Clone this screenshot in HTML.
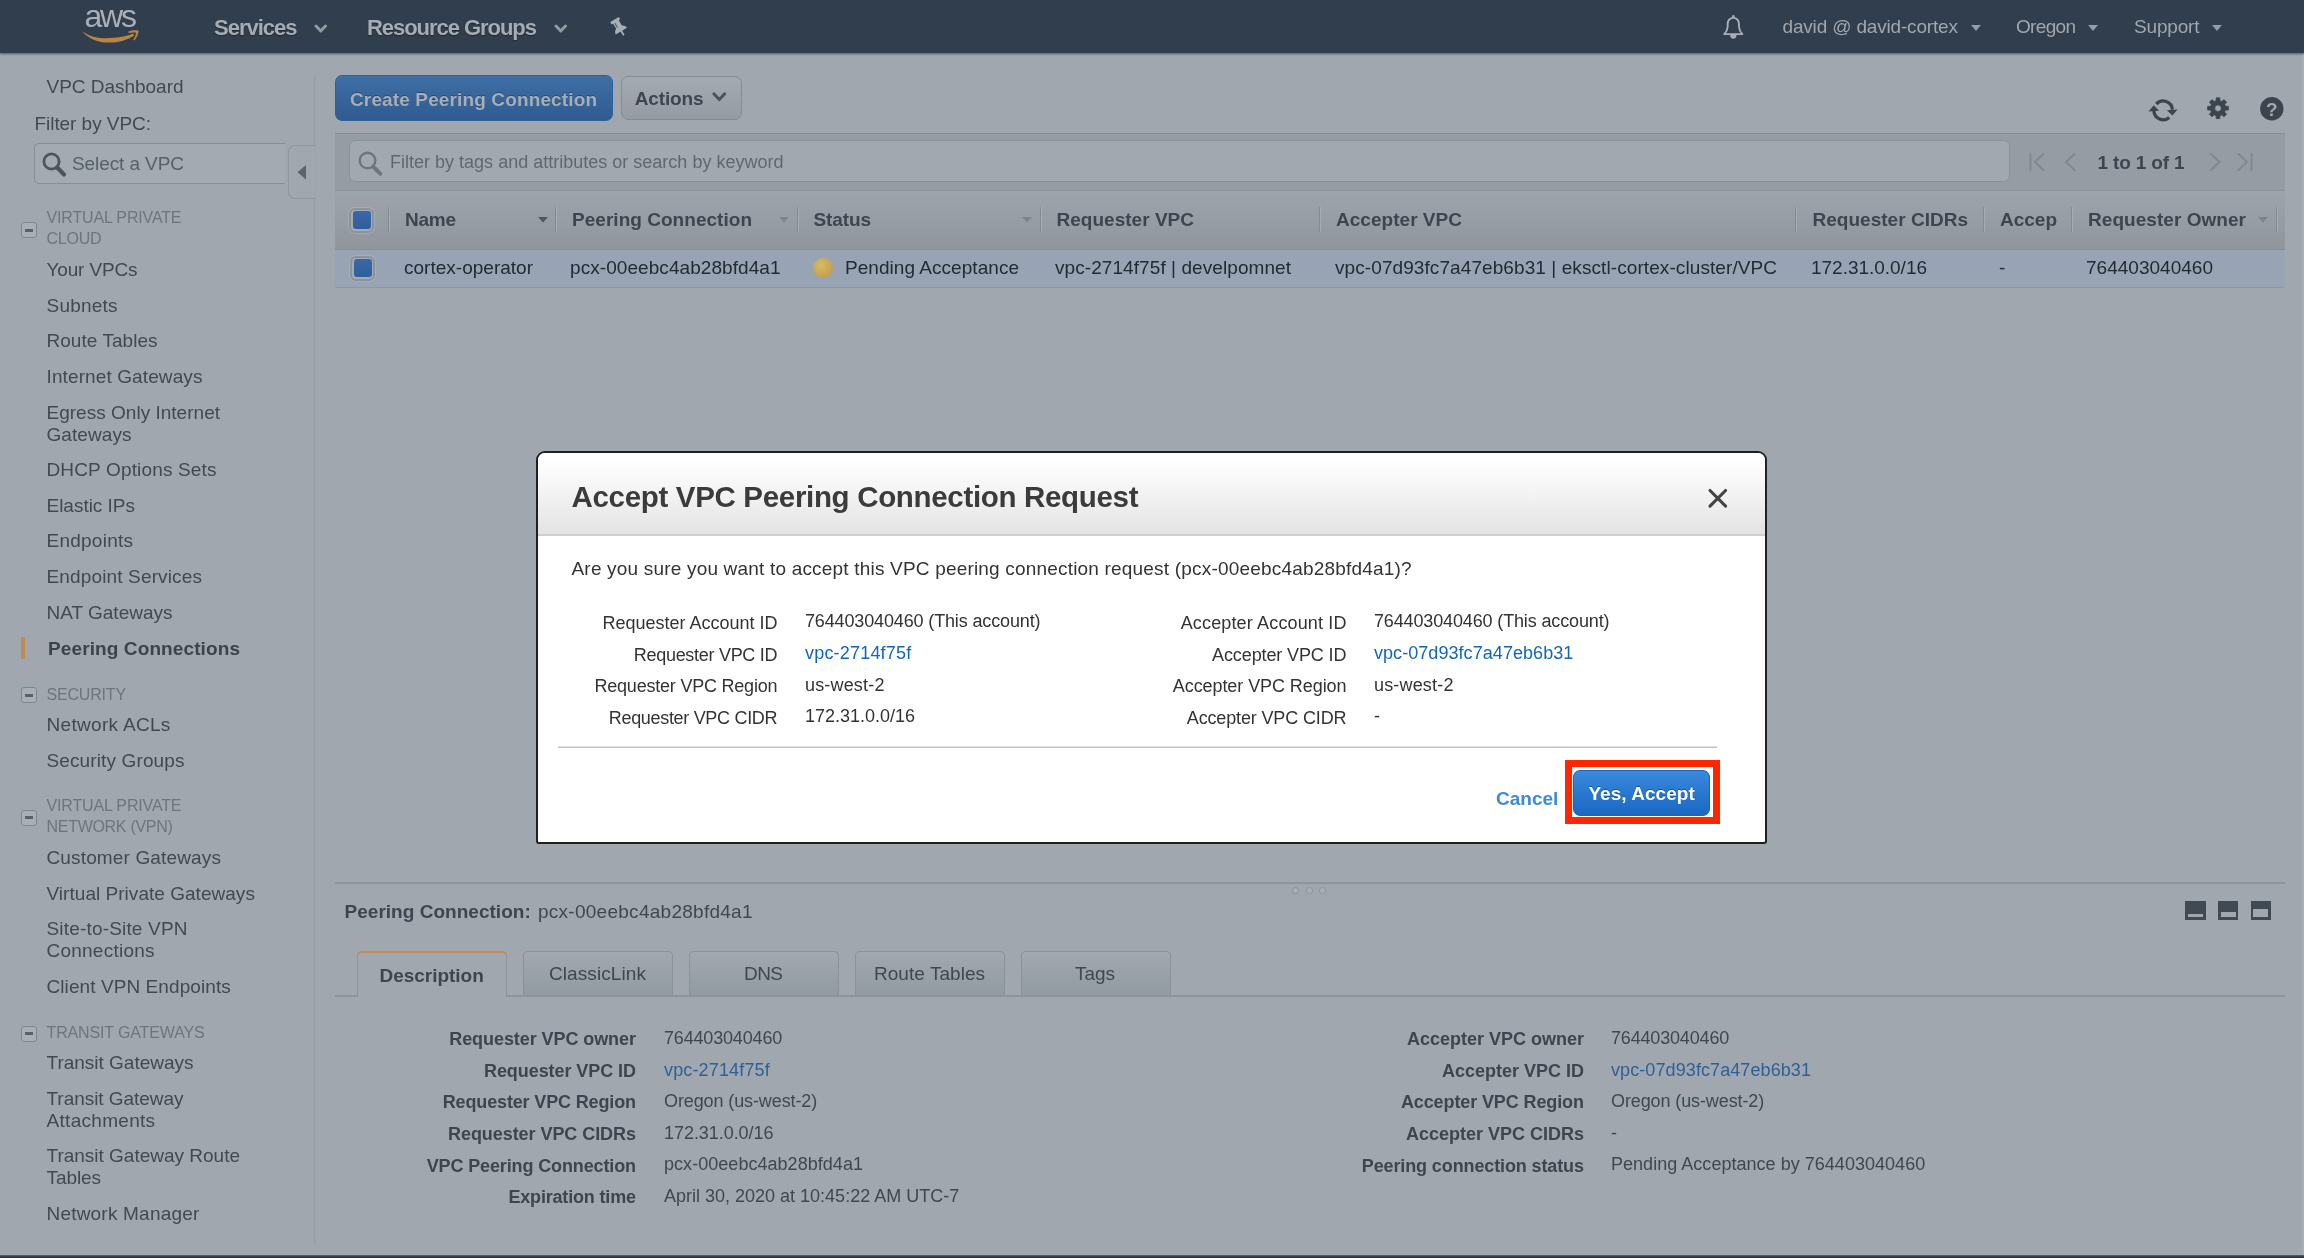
<!DOCTYPE html>
<html lang="en"><head><meta charset="utf-8"><title>VPC Management Console</title>
<style>
html,body{margin:0;padding:0;}
body{width:2304px;height:1258px;overflow:hidden;position:relative;background:#a0a7af;font-family:'Liberation Sans', sans-serif;}
div,span,svg{position:absolute;box-sizing:border-box;}
span{white-space:pre;}
</style></head><body>
<div id="app" style="left:0;top:0;width:2304px;height:1258px;will-change:transform;">
<div style="left:0px;top:0px;width:2304px;height:53px;background:#303e4d;box-shadow:0 1px 2px rgba(20,28,38,.55);"></div>
<svg style="left:78px;top:27px" width="64" height="18" viewBox="78 27 64 18"><path d="M81.9 30.9 C90 37,100 38.6,110 38.1 C120 37.6,128 36,133.2 33.6 L134.1 35.4 C128 39.6,119 42.6,109 42.6 C98 42.6,88 38.6,81.9 30.9 Z" fill="#ba8444"/><path d="M128.3 31.6 C131.5 30.4,135.5 29.9,138.7 30.6 C138.5 33.5,137 37.5,134.4 40.5 L133.2 39.8 C134.9 37.2,136 34.6,136 32.7 C133.8 32.3,131 32.5,128.6 33.1 Z" fill="#ba8444"/></svg>
<svg style="left:313.5px;top:23.5px" width="13.5" height="10" viewBox="0 0 13.5 10"><path d="M2 2 L6.75 7 L11.5 2" fill="none" stroke="#9299a1" stroke-width="3" stroke-linecap="round" stroke-linejoin="round"/></svg>
<svg style="left:553.5px;top:23.5px" width="13.5" height="10" viewBox="0 0 13.5 10"><path d="M2 2 L6.75 7 L11.5 2" fill="none" stroke="#9299a1" stroke-width="3" stroke-linecap="round" stroke-linejoin="round"/></svg>
<svg style="left:605.5px;top:13.6px" width="26" height="26" viewBox="0 0 26 26"><g transform="translate(13.1 13.3) rotate(-30.6)" fill="#a7aeb6"><rect x="-5.2" y="-9" width="10.4" height="2.7" rx="1.2"/><rect x="-3.3" y="-7" width="6.6" height="8"/><path d="M-6.6 4.4 C-6.2 0.6,-3 -0.8,0 -0.8 C3 -0.8,6.2 0.6,6.6 4.4 Z"/><rect x="-0.85" y="4" width="1.7" height="5.2"/><rect x="-2.1" y="-5.6" width="1" height="5" fill="#4a5866"/></g></svg>
<svg style="left:1720px;top:13px" width="28" height="28" viewBox="0 0 28 28"><path d="M4.2 21.1 C6.2 19.2,7.3 17.5,7.6 14 L7.7 10.5 A5.6 5.6 0 0 1 18.9 10.5 L19 14 C19.3 17.5,20.4 19.2,22.4 21.1 Z" fill="none" stroke="#a7aeb6" stroke-width="1.9" stroke-linejoin="round"/><circle cx="13.3" cy="3.2" r="1.25" fill="#a7aeb6"/><path d="M13.3 3 L13.3 5" stroke="#a7aeb6" stroke-width="2"/><path d="M10.1 22 A3.2 3.7 0 0 0 16.5 22 Z" fill="#a7aeb6"/></svg>
<svg style="left:1971px;top:24.5px" width="10" height="6" viewBox="0 0 10 6"><path d="M0 0 L10 0 L5.0 6 Z" fill="#969da5"/></svg>
<svg style="left:2088px;top:24.5px" width="10" height="6" viewBox="0 0 10 6"><path d="M0 0 L10 0 L5.0 6 Z" fill="#969da5"/></svg>
<svg style="left:2212px;top:24.5px" width="10" height="6" viewBox="0 0 10 6"><path d="M0 0 L10 0 L5.0 6 Z" fill="#969da5"/></svg>
<div style="left:314px;top:75px;width:1px;height:1169px;background:#969da5;"></div>
<div style="left:315px;top:75px;width:1px;height:1169px;background:#9ca3ab;"></div>
<div style="left:34px;top:143px;width:251px;height:40.5px;border:1.5px solid #878e96;border-right:none;border-radius:5px 0 0 5px;background:#a3aab2;"></div>
<div style="left:287.5px;top:144.5px;width:27.5px;height:54px;border:1.5px solid #8f969e;border-right:none;border-radius:7px 0 0 7px;background:#a0a7af;"></div>
<svg style="left:296px;top:164px" width="12" height="17" viewBox="0 0 12 17"><path d="M1.5 8.2 L10 1 L10 15.5 Z" fill="#5b636c"/></svg>
<svg style="left:40px;top:150px" width="28" height="28" viewBox="0 0 28 28"><circle cx="11.5" cy="11.5" r="7.6" fill="none" stroke="#4c545d" stroke-width="2.8"/><path d="M17.2 17.6 L24 24.4" stroke="#4c545d" stroke-width="4.2" stroke-linecap="round"/></svg>
<div style="left:21px;top:222px;width:16px;height:16px;border:1.5px solid #7f868e;border-radius:3px;background:#a8afb6;"></div>
<div style="left:25px;top:228.5px;width:8px;height:3px;background:#59616a;"></div>
<div style="left:21px;top:687px;width:16px;height:16px;border:1.5px solid #7f868e;border-radius:3px;background:#a8afb6;"></div>
<div style="left:25px;top:693.5px;width:8px;height:3px;background:#59616a;"></div>
<div style="left:21px;top:809.5px;width:16px;height:16px;border:1.5px solid #7f868e;border-radius:3px;background:#a8afb6;"></div>
<div style="left:25px;top:816.0px;width:8px;height:3px;background:#59616a;"></div>
<div style="left:21px;top:1025.5px;width:16px;height:16px;border:1.5px solid #7f868e;border-radius:3px;background:#a8afb6;"></div>
<div style="left:25px;top:1032.0px;width:8px;height:3px;background:#59616a;"></div>
<div style="left:21px;top:636.5px;width:4px;height:22px;background:#c08a52;border-radius:1px;"></div>
<div style="left:335px;top:75px;width:278px;height:45.5px;border:1.5px solid #30609a;border-radius:7px;background:linear-gradient(#3e6fa4,#305b91);"></div>
<div style="left:620.5px;top:75.5px;width:121px;height:44.5px;border:1.5px solid #858c95;border-radius:7px;background:linear-gradient(#a3aab2,#949ba3);"></div>
<svg style="left:712px;top:92px" width="14.5" height="10.5" viewBox="0 0 14.5 10.5"><path d="M2 2 L7.25 7.5 L12.5 2" fill="none" stroke="#4c545d" stroke-width="3.2" stroke-linecap="round" stroke-linejoin="round"/></svg>
<svg style="left:2145px;top:95px" width="36" height="30" viewBox="0 0 36 30"><g fill="none" stroke="#3c444e" stroke-width="3.3"><path d="M11.2 9 A9.4 9.4 0 0 1 27.4 14.6"/><path d="M8.9 16 A9.4 9.4 0 0 0 24.3 22.6"/></g><path d="M21.8 15.2 L32.6 14.4 L27.4 20.6 Z" fill="#3c444e"/><path d="M3.5 16.6 L8.8 10.2 L14 15.8 Z" fill="#3c444e"/></svg>
<svg style="left:2205px;top:95px" width="26" height="26" viewBox="0 0 26 26"><path d="M23.34 11.39 L23.34 15.01 L20.46 15.11 L19.63 17.12 L21.59 19.24 L19.04 21.79 L16.92 19.83 L14.91 20.66 L14.81 23.54 L11.19 23.54 L11.09 20.66 L9.08 19.83 L6.96 21.79 L4.41 19.24 L6.37 17.12 L5.54 15.11 L2.66 15.01 L2.66 11.39 L5.54 11.29 L6.37 9.28 L4.41 7.16 L6.96 4.61 L9.08 6.57 L11.09 5.74 L11.19 2.86 L14.81 2.86 L14.91 5.74 L16.92 6.57 L19.04 4.61 L21.59 7.16 L19.63 9.28 L20.46 11.29 Z M16.3 13.2 A3.3 3.3 0 1 0 9.7 13.2 A3.3 3.3 0 1 0 16.3 13.2 Z" fill="#3c444e" fill-rule="evenodd" stroke="#3c444e" stroke-width="0.8" stroke-linejoin="round"/></svg>
<svg style="left:2259px;top:97px" width="26" height="26" viewBox="0 0 26 26"><circle cx="12.8" cy="11.8" r="11.7" fill="#3c444e"/><text x="12.8" y="18.5" text-anchor="middle" font-family="Liberation Sans" font-weight="700" font-size="19" fill="#a0a7af">?</text></svg>
<div style="left:335px;top:133px;width:1950px;height:57.5px;background:#959ca4;border-top:1.5px solid #858c94;"></div>
<div style="left:349px;top:140px;width:1660.5px;height:41.5px;border:1.5px solid #8a9199;border-radius:6px;background:#a1a8b0;"></div>
<svg style="left:356px;top:149px" width="28" height="28" viewBox="0 0 28 28"><circle cx="11.5" cy="11.5" r="7.8" fill="none" stroke="#6d757d" stroke-width="2.4"/><path d="M17.4 17.8 L24.4 24.8" stroke="#6d757d" stroke-width="3.8" stroke-linecap="round"/></svg>
<svg style="left:2029px;top:152.5px" width="16" height="18" viewBox="0 0 16 18"><path d="M1.5 1 L1.5 17 M14.5 1 L6 9 L14.5 17" fill="none" stroke="#818890" stroke-width="2" stroke-linecap="round" stroke-linejoin="round"/></svg>
<svg style="left:2064px;top:152.5px" width="13" height="18" viewBox="0 0 13 18"><path d="M10.5 1 L2 9 L10.5 17" fill="none" stroke="#818890" stroke-width="2" stroke-linecap="round" stroke-linejoin="round"/></svg>
<svg style="left:2208.5px;top:152.5px" width="13" height="18" viewBox="0 0 13 18"><path d="M2 1 L10.5 9 L2 17" fill="none" stroke="#818890" stroke-width="2" stroke-linecap="round" stroke-linejoin="round"/></svg>
<svg style="left:2237px;top:152.5px" width="16" height="18" viewBox="0 0 16 18"><path d="M14.5 1 L14.5 17 M1.5 1 L10 9 L1.5 17" fill="none" stroke="#818890" stroke-width="2" stroke-linecap="round" stroke-linejoin="round"/></svg>
<div style="left:335px;top:190px;width:1950px;height:59.5px;background:linear-gradient(#9da4ac,#8f969e);border-top:1px solid #8b929a;border-bottom:1.5px solid #868d95;"></div>
<div style="left:335px;top:249.5px;width:1950px;height:38px;background:#98a4b3;border-bottom:1.5px solid #8d98a6;"></div>
<div style="left:349px;top:207.5px;width:25px;height:25px;border:2px solid #8b929b;border-radius:6px;background:#a4abb3;box-shadow:0 0 0 1px rgba(176,183,190,.55);"></div>
<div style="left:352.5px;top:211.0px;width:18px;height:18px;border-radius:3px;background:linear-gradient(#3767a6,#30609c);"></div>
<div style="left:350px;top:255.5px;width:25px;height:25px;border:2px solid #8b929b;border-radius:6px;background:#a4abb3;box-shadow:0 0 0 1px rgba(176,183,190,.55);"></div>
<div style="left:353.5px;top:259.0px;width:18px;height:18px;border-radius:3px;background:linear-gradient(#3767a6,#30609c);"></div>
<div style="left:388px;top:207px;width:1px;height:24.5px;background:#838a92;"></div>
<div style="left:389px;top:207px;width:1px;height:24.5px;background:#a6adb5;"></div>
<div style="left:555px;top:207px;width:1px;height:24.5px;background:#838a92;"></div>
<div style="left:556px;top:207px;width:1px;height:24.5px;background:#a6adb5;"></div>
<div style="left:797px;top:207px;width:1px;height:24.5px;background:#838a92;"></div>
<div style="left:798px;top:207px;width:1px;height:24.5px;background:#a6adb5;"></div>
<div style="left:1040px;top:207px;width:1px;height:24.5px;background:#838a92;"></div>
<div style="left:1041px;top:207px;width:1px;height:24.5px;background:#a6adb5;"></div>
<div style="left:1319px;top:207px;width:1px;height:24.5px;background:#838a92;"></div>
<div style="left:1320px;top:207px;width:1px;height:24.5px;background:#a6adb5;"></div>
<div style="left:1795px;top:207px;width:1px;height:24.5px;background:#838a92;"></div>
<div style="left:1796px;top:207px;width:1px;height:24.5px;background:#a6adb5;"></div>
<div style="left:1983px;top:207px;width:1px;height:24.5px;background:#838a92;"></div>
<div style="left:1984px;top:207px;width:1px;height:24.5px;background:#a6adb5;"></div>
<div style="left:2071px;top:207px;width:1px;height:24.5px;background:#838a92;"></div>
<div style="left:2072px;top:207px;width:1px;height:24.5px;background:#a6adb5;"></div>
<div style="left:2276px;top:207px;width:1px;height:24.5px;background:#838a92;"></div>
<div style="left:2277px;top:207px;width:1px;height:24.5px;background:#a6adb5;"></div>
<svg style="left:537.5px;top:217px" width="10" height="5.5" viewBox="0 0 10 5.5"><path d="M0 0 L10 0 L5.0 5.5 Z" fill="#4d555e"/></svg>
<svg style="left:779px;top:217px" width="10" height="5.5" viewBox="0 0 10 5.5"><path d="M0 0 L10 0 L5.0 5.5 Z" fill="#7d848c"/></svg>
<svg style="left:1022px;top:217px" width="10" height="5.5" viewBox="0 0 10 5.5"><path d="M0 0 L10 0 L5.0 5.5 Z" fill="#7d848c"/></svg>
<svg style="left:2258px;top:217px" width="10" height="5.5" viewBox="0 0 10 5.5"><path d="M0 0 L10 0 L5.0 5.5 Z" fill="#7d848c"/></svg>
<div style="left:813px;top:257.5px;width:20px;height:20px;border-radius:50%;background:radial-gradient(circle at 40% 35%,#d6bb68,#c5a44f 62%,#b59445);"></div>
<div style="left:334.5px;top:882px;width:1950.5px;height:2px;background:#8d949c;"></div>
<div style="left:1292px;top:887px;width:6.5px;height:6.5px;border:1.5px solid #8a9199;border-radius:50%;background:#a9b0b7;"></div>
<div style="left:1306px;top:887px;width:6.5px;height:6.5px;border:1.5px solid #8a9199;border-radius:50%;background:#a9b0b7;"></div>
<div style="left:1319px;top:887px;width:6.5px;height:6.5px;border:1.5px solid #8a9199;border-radius:50%;background:#a9b0b7;"></div>
<div style="left:2185px;top:900.5px;width:20.5px;height:19px;background:#414953;"></div>
<div style="left:2187.8px;top:914.3px;width:15px;height:2.8px;background:#a0a7af;"></div>
<div style="left:2217.8px;top:900.5px;width:20.5px;height:19px;background:#414953;"></div>
<div style="left:2220.5px;top:911.5px;width:15.2px;height:5.2px;background:#a0a7af;"></div>
<div style="left:2250.6px;top:900.5px;width:20.5px;height:19px;background:#414953;"></div>
<div style="left:2253.3px;top:908.6px;width:15.2px;height:8px;background:#a0a7af;"></div>
<div style="left:334.5px;top:994.5px;width:1950.5px;height:2px;background:#8d949c;"></div>
<div style="left:357px;top:951px;width:150px;height:45.5px;background:#a0a7af;border:1.5px solid #8d949c;border-bottom:none;border-top:2.5px solid #bf8a55;border-radius:5px 5px 0 0;"></div>
<div style="left:522.5px;top:951px;width:150.5px;height:44px;background:linear-gradient(#a1a8b0,#929aa2);border:1.5px solid #8a9199;border-bottom:none;border-radius:5px 5px 0 0;"></div>
<div style="left:688.75px;top:951px;width:150.5px;height:44px;background:linear-gradient(#a1a8b0,#929aa2);border:1.5px solid #8a9199;border-bottom:none;border-radius:5px 5px 0 0;"></div>
<div style="left:854.5px;top:951px;width:150.5px;height:44px;background:linear-gradient(#a1a8b0,#929aa2);border:1.5px solid #8a9199;border-bottom:none;border-radius:5px 5px 0 0;"></div>
<div style="left:1020.5px;top:951px;width:150.5px;height:44px;background:linear-gradient(#a1a8b0,#929aa2);border:1.5px solid #8a9199;border-bottom:none;border-radius:5px 5px 0 0;"></div>
<div style="left:2302px;top:55px;width:2px;height:1200px;background:#a7aeb6;"></div>
<div style="left:0px;top:1254.5px;width:2304px;height:4px;background:linear-gradient(#56626f,#1f2b38 70%);"></div>
<span style="left:84.50px;top:-5.00px;font-size:32px;line-height:42px;color:#a9b0b9;letter-spacing:-2.203px;">aws</span>
<span style="left:214.00px;top:12.50px;font-size:22px;line-height:29px;color:#a5acb4;font-weight:700;letter-spacing:-1.004px;text-shadow:0 1px 1px rgba(20,28,38,.6);">Services</span>
<span style="left:367.00px;top:12.50px;font-size:22px;line-height:29px;color:#a5acb4;font-weight:700;letter-spacing:-1.044px;text-shadow:0 1px 1px rgba(20,28,38,.6);">Resource Groups</span>
<span style="left:1782.50px;top:14.00px;font-size:19px;line-height:25px;color:#a0a7af;letter-spacing:-0.172px;">david @ david-cortex</span>
<span style="left:2016.00px;top:14.00px;font-size:19px;line-height:25px;color:#a0a7af;letter-spacing:-0.675px;">Oregon</span>
<span style="left:2134.00px;top:14.00px;font-size:19px;line-height:25px;color:#a0a7af;letter-spacing:-0.174px;">Support</span>
<span style="left:46.50px;top:74.00px;font-size:19px;line-height:25px;color:#414953;letter-spacing:-0.025px;">VPC Dashboard</span>
<span style="left:34.50px;top:111.00px;font-size:19px;line-height:25px;color:#414953;letter-spacing:-0.054px;">Filter by VPC:</span>
<span style="left:72.00px;top:151.00px;font-size:19px;line-height:25px;color:#566069;letter-spacing:-0.091px;">Select a VPC</span>
<span style="left:46.50px;top:207.00px;font-size:16px;line-height:21px;color:#6d757d;letter-spacing:-0.158px;">VIRTUAL PRIVATE</span>
<span style="left:46.50px;top:228.00px;font-size:16px;line-height:21px;color:#6d757d;letter-spacing:-0.254px;">CLOUD</span>
<span style="left:46.50px;top:257.30px;font-size:19px;line-height:25px;color:#414953;letter-spacing:-0.156px;">Your VPCs</span>
<span style="left:46.50px;top:292.80px;font-size:19px;line-height:25px;color:#414953;letter-spacing:0.211px;">Subnets</span>
<span style="left:46.50px;top:328.30px;font-size:19px;line-height:25px;color:#414953;letter-spacing:0.040px;">Route Tables</span>
<span style="left:46.50px;top:364.30px;font-size:19px;line-height:25px;color:#414953;letter-spacing:0.112px;">Internet Gateways</span>
<span style="left:46.50px;top:399.80px;font-size:19px;line-height:25px;color:#414953;letter-spacing:0.016px;">Egress Only Internet</span>
<span style="left:46.50px;top:421.80px;font-size:19px;line-height:25px;color:#414953;letter-spacing:0.074px;">Gateways</span>
<span style="left:46.50px;top:457.30px;font-size:19px;line-height:25px;color:#414953;letter-spacing:0.152px;">DHCP Options Sets</span>
<span style="left:46.50px;top:492.80px;font-size:19px;line-height:25px;color:#414953;letter-spacing:-0.020px;">Elastic IPs</span>
<span style="left:46.50px;top:528.30px;font-size:19px;line-height:25px;color:#414953;letter-spacing:0.248px;">Endpoints</span>
<span style="left:46.50px;top:564.30px;font-size:19px;line-height:25px;color:#414953;letter-spacing:0.146px;">Endpoint Services</span>
<span style="left:46.50px;top:599.80px;font-size:19px;line-height:25px;color:#414953;">NAT Gateways</span>
<span style="left:48.00px;top:635.50px;font-size:19px;line-height:25px;color:#3b434d;font-weight:700;letter-spacing:0.109px;">Peering Connections</span>
<span style="left:46.50px;top:683.50px;font-size:16px;line-height:21px;color:#6d757d;letter-spacing:-0.187px;">SECURITY</span>
<span style="left:46.50px;top:712.30px;font-size:19px;line-height:25px;color:#414953;letter-spacing:0.311px;">Network ACLs</span>
<span style="left:46.50px;top:747.80px;font-size:19px;line-height:25px;color:#414953;letter-spacing:0.126px;">Security Groups</span>
<span style="left:46.50px;top:795.00px;font-size:16px;line-height:21px;color:#6d757d;letter-spacing:-0.158px;">VIRTUAL PRIVATE</span>
<span style="left:46.50px;top:816.00px;font-size:16px;line-height:21px;color:#6d757d;letter-spacing:-0.290px;">NETWORK (VPN)</span>
<span style="left:46.50px;top:845.30px;font-size:19px;line-height:25px;color:#414953;letter-spacing:0.142px;">Customer Gateways</span>
<span style="left:46.50px;top:880.80px;font-size:19px;line-height:25px;color:#414953;letter-spacing:0.031px;">Virtual Private Gateways</span>
<span style="left:46.50px;top:916.30px;font-size:19px;line-height:25px;color:#414953;letter-spacing:0.178px;">Site-to-Site VPN</span>
<span style="left:46.50px;top:938.30px;font-size:19px;line-height:25px;color:#414953;letter-spacing:0.237px;">Connections</span>
<span style="left:46.50px;top:973.80px;font-size:19px;line-height:25px;color:#414953;letter-spacing:0.083px;">Client VPN Endpoints</span>
<span style="left:46.50px;top:1021.50px;font-size:16px;line-height:21px;color:#6d757d;letter-spacing:-0.141px;">TRANSIT GATEWAYS</span>
<span style="left:46.50px;top:1050.30px;font-size:19px;line-height:25px;color:#414953;letter-spacing:-0.008px;">Transit Gateways</span>
<span style="left:46.50px;top:1086.30px;font-size:19px;line-height:25px;color:#414953;letter-spacing:-0.045px;">Transit Gateway</span>
<span style="left:46.50px;top:1108.30px;font-size:19px;line-height:25px;color:#414953;letter-spacing:0.299px;">Attachments</span>
<span style="left:46.50px;top:1143.30px;font-size:19px;line-height:25px;color:#414953;letter-spacing:-0.005px;">Transit Gateway Route</span>
<span style="left:46.50px;top:1165.30px;font-size:19px;line-height:25px;color:#414953;letter-spacing:-0.084px;">Tables</span>
<span style="left:46.50px;top:1201.30px;font-size:19px;line-height:25px;color:#414953;letter-spacing:0.203px;">Network Manager</span>
<span style="left:350.00px;top:86.50px;font-size:19px;line-height:25px;color:#a7aeb6;font-weight:700;letter-spacing:0.130px;text-shadow:0 -1px 0 rgba(20,40,80,.45);">Create Peering Connection</span>
<span style="left:634.75px;top:86.00px;font-size:19px;line-height:25px;color:#3d4650;font-weight:700;letter-spacing:-0.156px;">Actions</span>
<span style="left:390.00px;top:151.00px;font-size:18px;line-height:23px;color:#5f6871;letter-spacing:0.006px;">Filter by tags and attributes or search by keyword</span>
<span style="left:2097.50px;top:149.50px;font-size:19px;line-height:25px;color:#3d4650;font-weight:700;letter-spacing:-0.169px;">1 to 1 of 1</span>
<span style="left:405.00px;top:207.00px;font-size:19px;line-height:25px;color:#3d4650;font-weight:700;letter-spacing:-0.250px;">Name</span>
<span style="left:572.00px;top:207.00px;font-size:19px;line-height:25px;color:#3d4650;font-weight:700;letter-spacing:0.031px;">Peering Connection</span>
<span style="left:813.50px;top:207.00px;font-size:19px;line-height:25px;color:#3d4650;font-weight:700;letter-spacing:-0.116px;">Status</span>
<span style="left:1056.50px;top:207.00px;font-size:19px;line-height:25px;color:#3d4650;font-weight:700;letter-spacing:0.018px;">Requester VPC</span>
<span style="left:1336.00px;top:207.00px;font-size:19px;line-height:25px;color:#3d4650;font-weight:700;letter-spacing:0.030px;">Accepter VPC</span>
<span style="left:1812.50px;top:207.00px;font-size:19px;line-height:25px;color:#3d4650;font-weight:700;letter-spacing:0.020px;">Requester CIDRs</span>
<span style="left:2000.00px;top:207.00px;font-size:19px;line-height:25px;color:#3d4650;font-weight:700;letter-spacing:-0.008px;">Accep</span>
<span style="left:2088.00px;top:207.00px;font-size:19px;line-height:25px;color:#3d4650;font-weight:700;letter-spacing:0.048px;">Requester Owner</span>
<span style="left:404.00px;top:255.00px;font-size:19px;line-height:25px;color:#222a33;letter-spacing:0.011px;">cortex-operator</span>
<span style="left:570.00px;top:255.00px;font-size:19px;line-height:25px;color:#222a33;letter-spacing:0.066px;">pcx-00eebc4ab28bfd4a1</span>
<span style="left:845.00px;top:255.00px;font-size:19px;line-height:25px;color:#222a33;letter-spacing:0.044px;">Pending Acceptance</span>
<span style="left:1055.00px;top:255.00px;font-size:19px;line-height:25px;color:#222a33;letter-spacing:0.074px;">vpc-2714f75f | develpomnet</span>
<span style="left:1335.00px;top:255.00px;font-size:19px;line-height:25px;color:#222a33;letter-spacing:0.085px;">vpc-07d93fc7a47eb6b31 | eksctl-cortex-cluster/VPC</span>
<span style="left:1811.00px;top:255.00px;font-size:19px;line-height:25px;color:#222a33;letter-spacing:-0.018px;">172.31.0.0/16</span>
<span style="left:1999.00px;top:255.00px;font-size:19px;line-height:25px;color:#222a33;">-</span>
<span style="left:2086.00px;top:255.00px;font-size:19px;line-height:25px;color:#222a33;letter-spacing:0.017px;">764403040460</span>
<span style="left:344.50px;top:898.50px;font-size:19px;line-height:25px;color:#3d4650;font-weight:700;letter-spacing:0.025px;">Peering Connection:</span>
<span style="left:538.00px;top:898.50px;font-size:19px;line-height:25px;color:#3f4751;letter-spacing:0.266px;">pcx-00eebc4ab28bfd4a1</span>
<span style="left:379.50px;top:963.00px;font-size:19px;line-height:25px;color:#3d4650;font-weight:700;letter-spacing:-0.028px;">Description</span>
<span style="left:549.00px;top:960.50px;font-size:19px;line-height:25px;color:#3f4751;letter-spacing:0.091px;">ClassicLink</span>
<span style="left:744.00px;top:960.50px;font-size:19px;line-height:25px;color:#3f4751;letter-spacing:-0.562px;">DNS</span>
<span style="left:874.00px;top:960.50px;font-size:19px;line-height:25px;color:#3f4751;letter-spacing:0.040px;">Route Tables</span>
<span style="left:1075.00px;top:960.50px;font-size:19px;line-height:25px;color:#3f4751;letter-spacing:-0.047px;">Tags</span>
<span style="left:449.25px;top:1028.00px;font-size:18px;line-height:23px;color:#3d4650;font-weight:700;letter-spacing:-0.073px;">Requester VPC owner</span>
<span style="left:664.00px;top:1026.75px;font-size:18px;line-height:23px;color:#3f4751;letter-spacing:-0.172px;">764403040460</span>
<span style="left:484.00px;top:1059.75px;font-size:18px;line-height:23px;color:#3d4650;font-weight:700;letter-spacing:-0.070px;">Requester VPC ID</span>
<span style="left:664.00px;top:1058.50px;font-size:18px;line-height:23px;color:#2f5f97;letter-spacing:0.152px;">vpc-2714f75f</span>
<span style="left:442.75px;top:1091.25px;font-size:18px;line-height:23px;color:#3d4650;font-weight:700;letter-spacing:-0.147px;">Requester VPC Region</span>
<span style="left:664.00px;top:1090.00px;font-size:18px;line-height:23px;color:#3f4751;letter-spacing:-0.107px;">Oregon (us-west-2)</span>
<span style="left:448.00px;top:1123.00px;font-size:18px;line-height:23px;color:#3d4650;font-weight:700;letter-spacing:-0.059px;">Requester VPC CIDRs</span>
<span style="left:664.00px;top:1121.75px;font-size:18px;line-height:23px;color:#3f4751;letter-spacing:-0.051px;">172.31.0.0/16</span>
<span style="left:426.75px;top:1154.50px;font-size:18px;line-height:23px;color:#3d4650;font-weight:700;letter-spacing:-0.132px;">VPC Peering Connection</span>
<span style="left:664.00px;top:1153.25px;font-size:18px;line-height:23px;color:#3f4751;letter-spacing:0.041px;">pcx-00eebc4ab28bfd4a1</span>
<span style="left:508.40px;top:1186.25px;font-size:18px;line-height:23px;color:#3d4650;font-weight:700;letter-spacing:-0.174px;">Expiration time</span>
<span style="left:664.00px;top:1185.00px;font-size:18px;line-height:23px;color:#3f4751;">April 30, 2020 at 10:45:22 AM UTC-7</span>
<span style="left:1406.94px;top:1028.00px;font-size:18px;line-height:23px;color:#3d4650;font-weight:700;">Accepter VPC owner</span>
<span style="left:1611.00px;top:1026.75px;font-size:18px;line-height:23px;color:#3f4751;letter-spacing:-0.172px;">764403040460</span>
<span style="left:1441.94px;top:1059.75px;font-size:18px;line-height:23px;color:#3d4650;font-weight:700;">Accepter VPC ID</span>
<span style="left:1611.00px;top:1058.50px;font-size:18px;line-height:23px;color:#2f5f97;letter-spacing:0.091px;">vpc-07d93fc7a47eb6b31</span>
<span style="left:1400.90px;top:1091.25px;font-size:18px;line-height:23px;color:#3d4650;font-weight:700;letter-spacing:-0.108px;">Accepter VPC Region</span>
<span style="left:1611.00px;top:1090.00px;font-size:18px;line-height:23px;color:#3f4751;letter-spacing:-0.107px;">Oregon (us-west-2)</span>
<span style="left:1405.94px;top:1123.00px;font-size:18px;line-height:23px;color:#3d4650;font-weight:700;">Accepter VPC CIDRs</span>
<span style="left:1611.00px;top:1121.75px;font-size:18px;line-height:23px;color:#3f4751;">-</span>
<span style="left:1361.80px;top:1154.50px;font-size:18px;line-height:23px;color:#3d4650;font-weight:700;letter-spacing:-0.119px;">Peering connection status</span>
<span style="left:1611.00px;top:1153.25px;font-size:18px;line-height:23px;color:#3f4751;letter-spacing:0.028px;">Pending Acceptance by 764403040460</span>
</div>
<div id="dialog" style="left:0;top:0;width:2304px;height:1258px;will-change:transform;">
<div style="left:536px;top:450.5px;width:1230.5px;height:393.5px;border:2px solid #202020;border-radius:9px 9px 3px 3px;background:#fff;overflow:hidden;"><div style="left:0;top:0;width:100%;height:83px;background:linear-gradient(#ffffff 8%,#f3f3f3 50%,#e3e3e3);border-bottom:2px solid #cfcfcf;"></div></div>
<svg style="left:1705px;top:485px" width="26" height="26" viewBox="0 0 26 26"><path d="M5 5.5 L20.6 21.2 M20.6 5.5 L5 21.2" stroke="#444" stroke-width="3.1" stroke-linecap="round"/></svg>
<div style="left:558px;top:746px;width:1159px;height:1px;background:#e2e2e2;"></div>
<div style="left:558px;top:747px;width:1159px;height:1px;background:#c2c2c2;"></div>
<div style="left:1565px;top:760px;width:154.6px;height:64.4px;border:7px solid #ff2600;"></div>
<div style="left:1573px;top:770px;width:137.2px;height:45.5px;border:1.5px solid #1d62b3;border-radius:7px;background:linear-gradient(#3989dd,#1a68c2);"></div>
<span style="left:571.50px;top:478.00px;font-size:29.5px;line-height:38px;color:#3b3b3b;font-weight:700;letter-spacing:-0.323px;">Accept VPC Peering Connection Request</span>
<span style="left:571.50px;top:555.50px;font-size:19px;line-height:25px;color:#333333;letter-spacing:0.189px;">Are you sure you want to accept this VPC peering connection request (pcx-00eebc4ab28bfd4a1)?</span>
<span style="left:602.50px;top:611.75px;font-size:18px;line-height:23px;color:#333333;letter-spacing:-0.006px;">Requester Account ID</span>
<span style="left:805.00px;top:610.25px;font-size:18px;line-height:23px;color:#333333;letter-spacing:-0.141px;">764403040460 (This account)</span>
<span style="left:1180.70px;top:611.75px;font-size:18px;line-height:23px;color:#333333;letter-spacing:0.150px;">Accepter Account ID</span>
<span style="left:1374.00px;top:610.25px;font-size:18px;line-height:23px;color:#333333;letter-spacing:-0.141px;">764403040460 (This account)</span>
<span style="left:633.75px;top:643.50px;font-size:18px;line-height:23px;color:#333333;letter-spacing:-0.287px;">Requester VPC ID</span>
<span style="left:805.00px;top:642.00px;font-size:18px;line-height:23px;color:#1166bb;letter-spacing:0.197px;">vpc-2714f75f</span>
<span style="left:1212.10px;top:643.50px;font-size:18px;line-height:23px;color:#333333;letter-spacing:-0.118px;">Accepter VPC ID</span>
<span style="left:1374.00px;top:642.00px;font-size:18px;line-height:23px;color:#1166bb;letter-spacing:0.056px;">vpc-07d93fc7a47eb6b31</span>
<span style="left:594.50px;top:675.00px;font-size:18px;line-height:23px;color:#333333;letter-spacing:-0.216px;">Requester VPC Region</span>
<span style="left:805.00px;top:673.50px;font-size:18px;line-height:23px;color:#333333;letter-spacing:0.171px;">us-west-2</span>
<span style="left:1172.80px;top:675.00px;font-size:18px;line-height:23px;color:#333333;letter-spacing:-0.077px;">Accepter VPC Region</span>
<span style="left:1374.00px;top:673.50px;font-size:18px;line-height:23px;color:#333333;letter-spacing:0.171px;">us-west-2</span>
<span style="left:608.75px;top:706.75px;font-size:18px;line-height:23px;color:#333333;letter-spacing:-0.312px;">Requester VPC CIDR</span>
<span style="left:805.00px;top:705.25px;font-size:18px;line-height:23px;color:#333333;letter-spacing:-0.009px;">172.31.0.0/16</span>
<span style="left:1186.80px;top:706.75px;font-size:18px;line-height:23px;color:#333333;letter-spacing:-0.147px;">Accepter VPC CIDR</span>
<span style="left:1374.00px;top:705.25px;font-size:18px;line-height:23px;color:#333333;">-</span>
<span style="left:1496.00px;top:786.40px;font-size:19px;line-height:25px;color:#3a8bdd;font-weight:700;">Cancel</span>
<span style="left:1588.40px;top:781.30px;font-size:19px;line-height:25px;color:#ffffff;font-weight:700;letter-spacing:0.043px;text-shadow:0 -1px 0 rgba(0,30,90,.45);">Yes, Accept</span>
</div>
</body></html>
